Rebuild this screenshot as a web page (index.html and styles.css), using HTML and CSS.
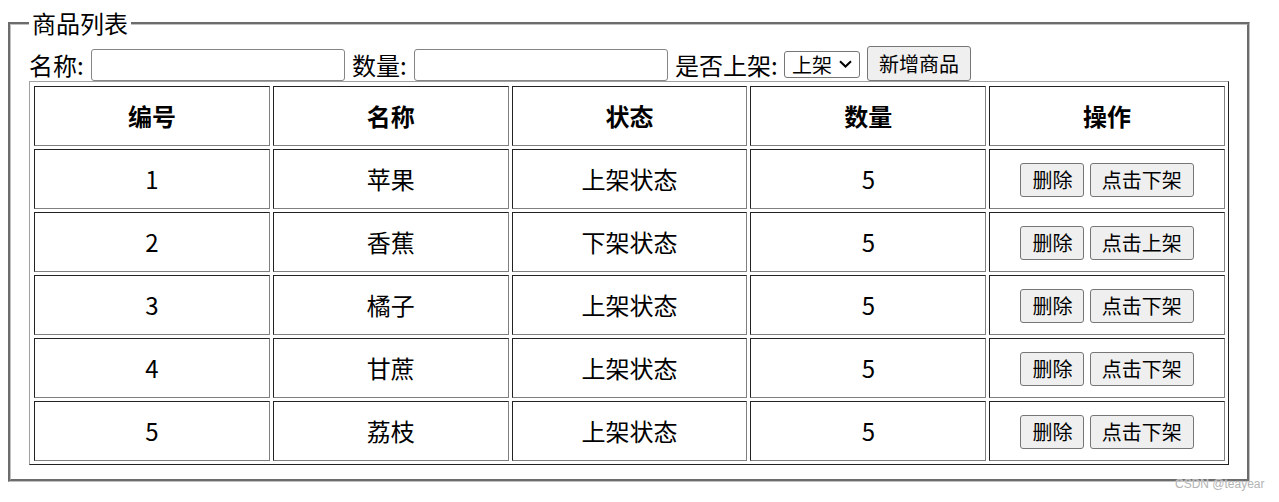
FILE: index.html
```html
<!DOCTYPE html>
<html lang="zh-CN">
<head>
<meta charset="utf-8">
<title>商品列表</title>
<link rel="stylesheet" href="styles.css">
</head>
<body>
<fieldset class="panel">
  <legend class="panel-title">商品列表</legend>
  <div class="toolbar">
    <label class="lbl lbl-short">名称:</label>
    <input class="field" type="text">
    <label class="lbl lbl-short">数量:</label>
    <input class="field" type="text">
    <label class="lbl lbl-long">是否上架:</label>
    <span class="select-wrap">
      <select class="picker">
        <option>上架</option>
        <option>下架</option>
      </select>
      <svg class="chevron" width="13" height="8" viewBox="0 0 13 8" aria-hidden="true"><path d="M1 1.2 L6.5 6.5 L12 1.2" fill="none" stroke="#000" stroke-width="2"/></svg>
    </span>
    <button class="btn btn-add" type="button">新增商品</button>
  </div>
  <table class="grid">
    <thead>
      <tr><th>编号</th><th>名称</th><th>状态</th><th>数量</th><th>操作</th></tr>
    </thead>
    <tbody>
      <tr><td>1</td><td>苹果</td><td>上架状态</td><td>5</td><td><button class="btn" type="button">删除</button> <button class="btn" type="button">点击下架</button></td></tr>
      <tr><td>2</td><td>香蕉</td><td>下架状态</td><td>5</td><td><button class="btn" type="button">删除</button> <button class="btn" type="button">点击上架</button></td></tr>
      <tr><td>3</td><td>橘子</td><td>上架状态</td><td>5</td><td><button class="btn" type="button">删除</button> <button class="btn" type="button">点击下架</button></td></tr>
      <tr><td>4</td><td>甘蔗</td><td>上架状态</td><td>5</td><td><button class="btn" type="button">删除</button> <button class="btn" type="button">点击下架</button></td></tr>
      <tr><td>5</td><td>荔枝</td><td>上架状态</td><td>5</td><td><button class="btn" type="button">删除</button> <button class="btn" type="button">点击下架</button></td></tr>
    </tbody>
  </table>
</fieldset>
<div class="watermark">CSDN @teayear</div>
</body>
</html>
```
FILE: styles.css
```css
html, body {
  background: #fff;
}
body {
  margin: 7px 29px 0 8px;
  font-family: "Noto Sans CJK SC", "Noto Sans", sans-serif;
  font-size: 24px;
  color: #000;
}
.panel {
  margin: 0;
  border: 3px groove #c0c0c0;
  padding: 7px 18px 14px 18px;
  min-width: 0;
}
.panel-title {
  padding: 0 3px;
  line-height: 32px;
  font-size: 24px;
}
.toolbar {
  display: flex;
  align-items: flex-end;
  gap: 7px;
  height: 35px;
}
.lbl {
  line-height: 32px;
  white-space: nowrap;
  flex: none;
}
.lbl-short { width: 55px; }
.lbl-long { width: 102px; }
.field {
  box-sizing: border-box;
  width: 254px;
  height: 32px;
  margin: 0;
  border: 1px solid #858585;
  border-radius: 3px;
  padding: 0 4px;
  font: 20px "Noto Sans CJK SC", sans-serif;
  flex: none;
}
.select-wrap {
  position: relative;
  display: block;
  flex: none;
  width: 76px;
  height: 27px;
  margin-bottom: 3px;
}
.picker {
  -webkit-appearance: none;
  appearance: none;
  box-sizing: border-box;
  display: block;
  width: 76px;
  height: 27px;
  margin: 0;
  border: 1px solid #767676;
  border-radius: 3px;
  padding: 0 0 0 7px;
  font: 20px/25px "Noto Sans CJK SC", sans-serif;
  background: #fff;
  color: #000;
}
.chevron {
  position: absolute;
  left: 55px;
  top: 9px;
  pointer-events: none;
}
.btn {
  box-sizing: border-box;
  height: 34px;
  margin: 0;
  padding: 0 11px;
  border: 1px solid #767676;
  border-radius: 3px;
  background: #efefef;
  color: #000;
  font: 20px/1 "Noto Sans CJK SC", sans-serif;
  vertical-align: middle;
}
.btn-add {
  height: 35px;
  flex: none;
}
.grid {
  width: 1200px;
  table-layout: fixed;
  border-collapse: separate;
  border-spacing: 3px;
  border: 1px solid;
  border-color: #a0a0a0 #222 #222 #a0a0a0;
  padding: 1px 0 0 1px;
}
.grid th, .grid td {
  height: 58px;
  padding: 0;
  border: 1px solid;
  border-color: #222 #808080 #808080 #222;
  text-align: center;
  vertical-align: middle;
  font-size: 24px;
  line-height: 32px;
}
.grid th {
  font-weight: 700;
}
.watermark {
  position: absolute;
  left: 1175px;
  top: 477px;
  font: 12px "Liberation Sans", Arial, sans-serif;
  color: #b4b4b4;
  text-shadow: 0 0 1px #fff;
  white-space: nowrap;
}
```
